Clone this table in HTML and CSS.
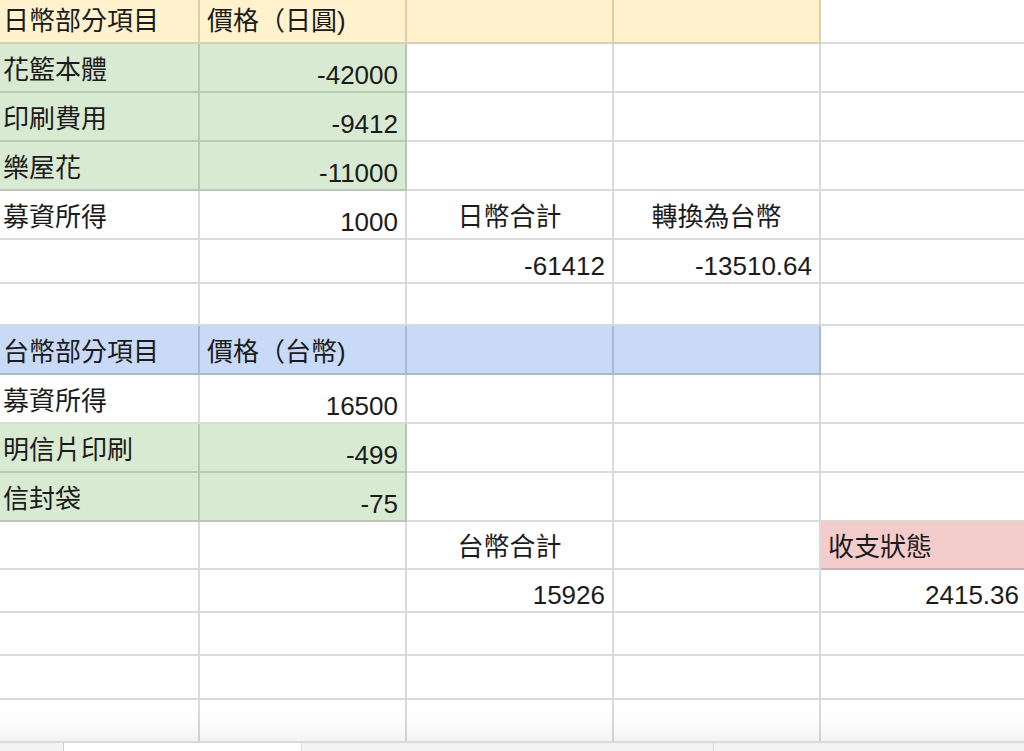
FILE: index.html
```html
<!DOCTYPE html>
<html lang="zh-Hant">
<head>
<meta charset="utf-8">
<title>收支</title>
<link rel="stylesheet" href="styles.css">
</head>
<body>
<div class="sheet">
  <div class="c y lab">日幣部分項目</div><div class="c y lab">價格（日圓)</div><div class="c y"></div><div class="c y"></div><div class="c"></div>
  <div class="c g lab">花籃本體</div><div class="c g num">-42000</div><div class="c"></div><div class="c"></div><div class="c"></div>
  <div class="c g lab">印刷費用</div><div class="c g num">-9412</div><div class="c"></div><div class="c"></div><div class="c"></div>
  <div class="c g lab">樂屋花</div><div class="c g num">-11000</div><div class="c"></div><div class="c"></div><div class="c"></div>
  <div class="c lab">募資所得</div><div class="c num">1000</div><div class="c lab ctr">日幣合計</div><div class="c lab ctr">轉換為台幣</div><div class="c"></div>
  <div class="c"></div><div class="c"></div><div class="c num">-61412</div><div class="c num">-13510.64</div><div class="c"></div>
  <div class="c"></div><div class="c"></div><div class="c"></div><div class="c"></div><div class="c"></div>
  <div class="c b lab">台幣部分項目</div><div class="c b lab">價格（台幣)</div><div class="c b"></div><div class="c b"></div><div class="c"></div>
  <div class="c lab">募資所得</div><div class="c num">16500</div><div class="c"></div><div class="c"></div><div class="c"></div>
  <div class="c g lab">明信片印刷</div><div class="c g num">-499</div><div class="c"></div><div class="c"></div><div class="c"></div>
  <div class="c g lab">信封袋</div><div class="c g num">-75</div><div class="c"></div><div class="c"></div><div class="c"></div>
  <div class="c"></div><div class="c"></div><div class="c lab ctr">台幣合計</div><div class="c"></div><div class="c r lab">收支狀態</div>
  <div class="c"></div><div class="c"></div><div class="c num">15926</div><div class="c"></div><div class="c num">2415.36</div>
  <div class="c"></div><div class="c"></div><div class="c"></div><div class="c"></div><div class="c"></div>
  <div class="c"></div><div class="c"></div><div class="c"></div><div class="c"></div><div class="c"></div>
  <div class="c last"></div><div class="c last"></div><div class="c last"></div><div class="c last"></div><div class="c last"></div>
</div>
<div class="tabs">
  <div class="tab-gap"></div>
  <div class="tab active"></div>
  <div class="tab"></div>
  <div class="tab rest"></div>
</div>
</body>
</html>
```
FILE: styles.css
```css
html, body {
  margin: 0;
  padding: 0;
  background: #ffffff;
  overflow: hidden;
  width: 1024px;
  height: 751px;
}

body {
  font-family: "Liberation Sans", "Noto Sans CJK TC", sans-serif;
  color: #1b1b1b;
}

.sheet {
  display: grid;
  grid-template-columns: 204px 207px 207px 207px 207px;
  grid-template-rows: 44px 49px 49px 49px 49px 44px 42px 49px 49px 49px 49px 48px 43px 43px 44px 43px;
  margin-left: -4px;
  width: 1032px;
}

.c {
  box-sizing: border-box;
  border-right: 2px solid rgba(0, 0, 0, 0.145);
  border-bottom: 2px solid rgba(0, 0, 0, 0.145);
  display: flex;
  align-items: flex-end;
  padding: 0 7px 1px 7px;
  font-size: 26px;
  line-height: 30px;
  white-space: nowrap;
  overflow: hidden;
}

.lab {
  padding-bottom: 6px;
}

.num {
  justify-content: flex-end;
  padding-right: 7px;
}

.ctr {
  justify-content: center;
}

.y { background-color: #fff2cc; }
.g { background-color: #d9ead3; }
.b { background-color: #c9daf8; }
.r { background-color: #f4cccc; }

.last {
  background: linear-gradient(to bottom, #ffffff 0%, #fdfdfd 50%, #f3f3f3 100%);
}

.tabs {
  display: flex;
  height: 8px;
  background: #f1f3f4;
}

.tab-gap {
  width: 63px;
  background: #f1f3f4;
  border-right: 1px solid #d0d0d0;
}

.tab {
  width: 237px;
  background: #ffffff;
}

.tab + .tab {
  width: 411px;
  background: #f1f3f4;
  border-left: 1px solid #e0e0e0;
}

.tab.rest {
  flex: 1;
  border-left: 1px solid #d8d8d8;
}
```
